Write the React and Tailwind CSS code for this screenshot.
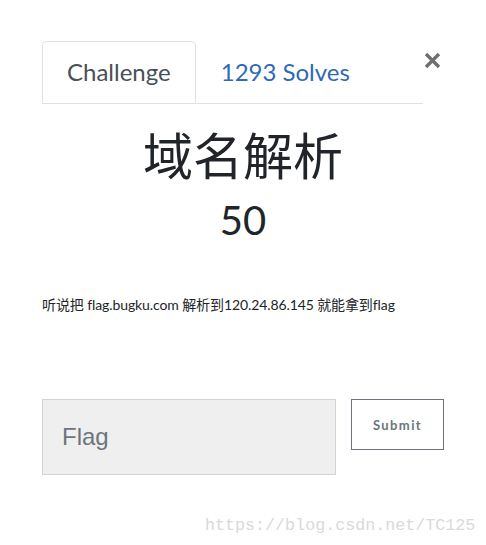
export default function App() {
  return (
    <div
      className="relative w-[486px] h-[545px] bg-white text-[#212529]"
      style={{ fontFamily: 'Lato, "Noto Sans CJK SC", sans-serif' }}
    >
      <div className="pt-[41px] pl-[42px] flex items-start">
        <div className="w-[381px] flex border-b border-[#dee2e6]">
          <div className="h-[62px] -mb-px px-[24px] flex items-center border border-[#dee2e6] border-b-white rounded-t-[5px] bg-white text-[24px] text-[#495057]">
            Challenge
          </div>
          <div className="h-[62px] px-[25px] flex items-center text-[24px] text-[#3069b5]">
            1293 Solves
          </div>
        </div>
        <button className="-ml-[1px] mt-[9px] w-[20px] h-[20px] flex items-center justify-center">
          <svg width="17" height="17" viewBox="0 0 17 17">
            <path d="M2 2 L15 15 M15 2 L2 15" stroke="#6f6f6f" strokeWidth="3.4" strokeLinecap="butt" />
          </svg>
        </button>
      </div>

      <h1 className="mt-[22px] text-center text-[50px] leading-[1.2] font-normal">域名解析</h1>
      <div className="mt-[10px] text-center text-[40px] leading-[1.2]">50</div>

      <p className="mt-[50px] pl-[42px] text-[14px] leading-[21px] tracking-[-0.1px]">
        听说把 flag.bugku.com 解析到120.24.86.145 就能拿到flag
      </p>

      <div className="mt-[84px] pl-[42px] flex items-start gap-[15px]">
        <input
          className="w-[294px] h-[76px] bg-[#efefef] border border-[#ced4da] px-[19px] text-[24px] placeholder-[#6c757d] outline-none"
          style={{ fontFamily: '"Liberation Sans", Arial, sans-serif' }}
          placeholder="Flag"
        />
        <button className="w-[93px] h-[51px] border border-[#6c757d] text-[#6c757d] text-[13px] font-bold tracking-[1.4px] pt-[3px]">
          Submit
        </button>
      </div>

      <div
        className="absolute left-[205px] top-[513px] text-[16.7px] text-[#dadada] whitespace-nowrap"
        style={{ fontFamily: '"Liberation Mono", monospace' }}
      >
        https://blog.csdn.net/TC125
      </div>
    </div>
  );
}
